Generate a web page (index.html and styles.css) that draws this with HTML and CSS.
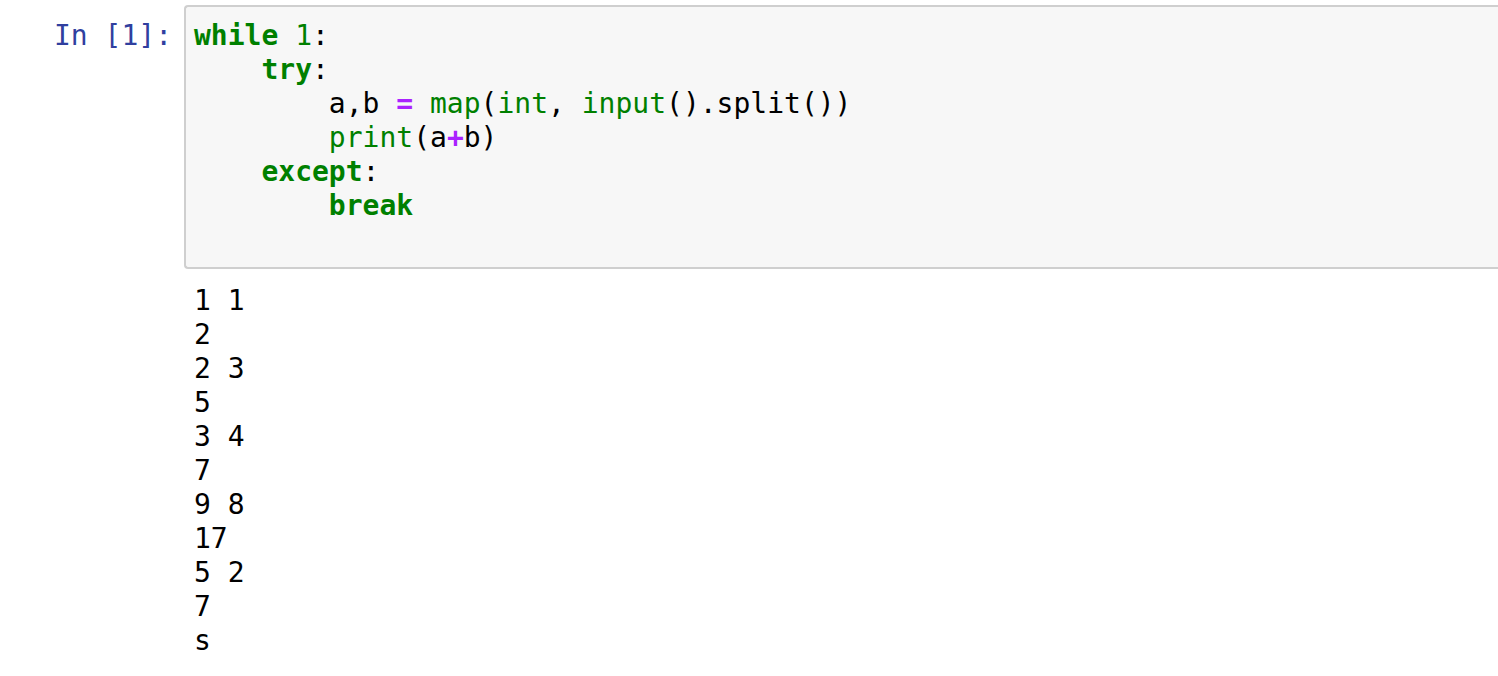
FILE: index.html
```html
<!DOCTYPE html>
<html>
<head>
<meta charset="utf-8">
<link rel="stylesheet" href="styles.css">
</head>
<body>
<div class="cell">
  <div class="input">
    <div class="prompt">In&nbsp;[1]:</div>
    <div class="input-area"><pre class="code"><span class="kw">while</span> <span class="num">1</span>:
    <span class="kw">try</span>:
        a,b <span class="op">=</span> <span class="bi">map</span>(<span class="bi">int</span>, <span class="bi">input</span>().split())
        <span class="bi">print</span>(a<span class="op">+</span>b)
    <span class="kw">except</span>:
        <span class="kw">break</span>
 </pre></div>
  </div>
  <div class="output">
    <div class="prompt-spacer"></div>
    <pre class="out">1 1
2
2 3
5
3 4
7
9 8
17
5 2
7
s</pre>
  </div>
</div>
</body>
</html>
```

FILE: styles.css
```css
html, body {
  margin: 0;
  padding: 0;
  background: #ffffff;
  overflow: hidden;
}
.cell {
  padding-top: 5px;
  font-family: "DejaVu Sans Mono", monospace;
  font-size: 28px;
  line-height: 34px;
}
.input {
  display: flex;
  align-items: flex-start;
}
.prompt {
  flex: none;
  width: 184px;
  box-sizing: border-box;
  text-align: right;
  color: #303f9f;
  padding-top: 14px;
  padding-right: 12px;
  white-space: nowrap;
}
.input-area {
  flex: 1;
  background: #f7f7f7;
  border: 2px solid #cfcfcf;
  border-right: none;
  border-radius: 4px 0 0 4px;
  padding: 12px 0 10px 8px;
}
pre {
  margin: 0;
  font-family: inherit;
  font-size: inherit;
  line-height: inherit;
}
.code {
  color: #000;
}
.kw {
  color: #008000;
  font-weight: bold;
}
.bi, .num {
  color: #008000;
}
.op {
  color: #aa22ff;
  font-weight: bold;
}
.output {
  display: flex;
  padding-top: 15px;
}
.prompt-spacer {
  width: 194px;
  flex: none;
}
.out {
  color: #000;
}
```
